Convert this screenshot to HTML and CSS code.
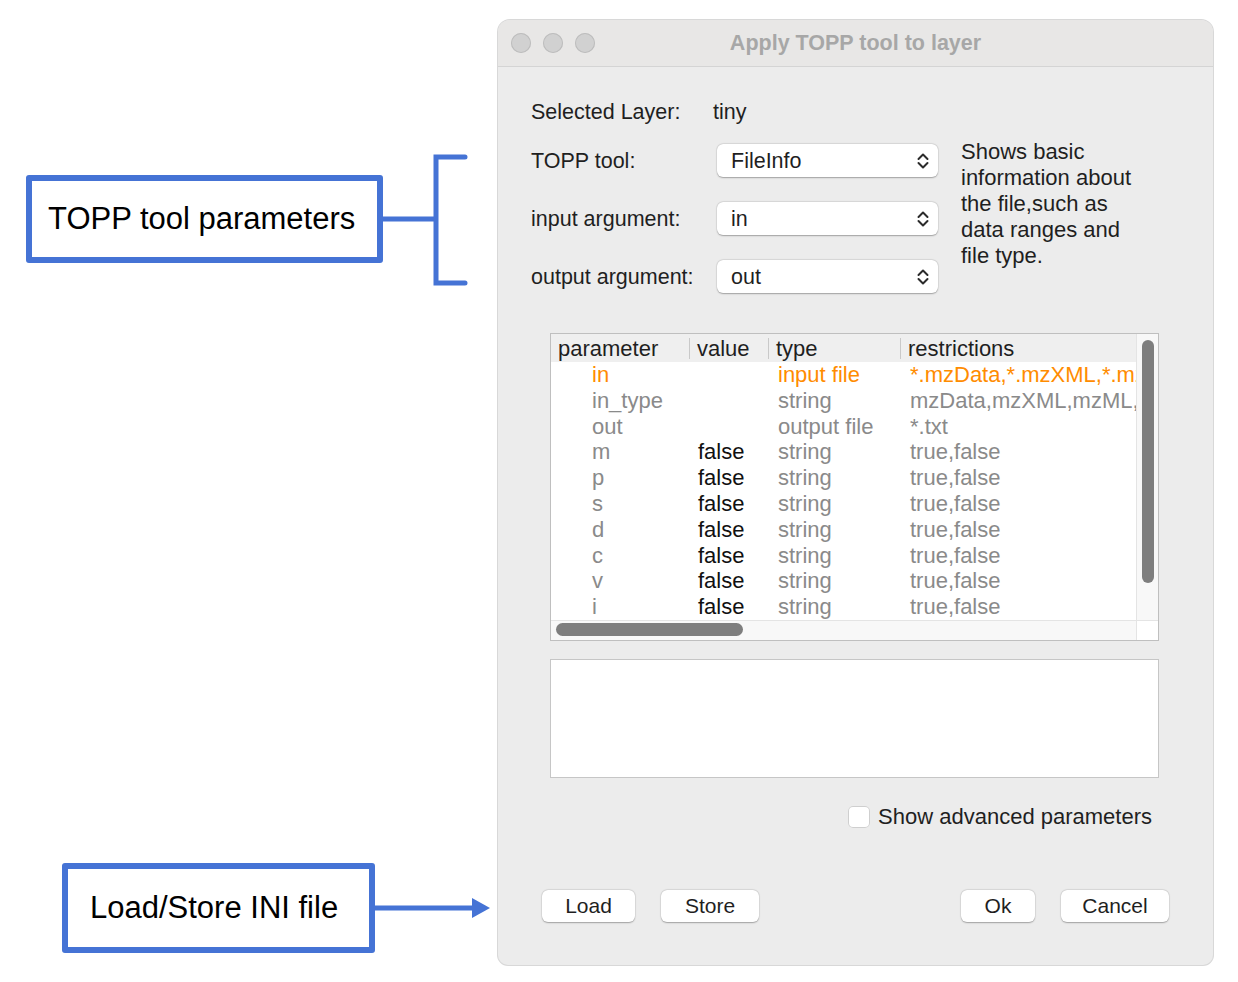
FILE: index.html
```html
<!DOCTYPE html>
<html lang="en">
<head>
<meta charset="utf-8">
<title>Apply TOPP tool to layer</title>
<link rel="stylesheet" href="styles.css">
</head>
<body>
<div class="canvas">
  <div class="dialog">
    <div class="titlebar">
      <div class="lights"><span class="light"></span><span class="light"></span><span class="light"></span></div>
      <div class="title">Apply TOPP tool to layer</div>
      <div></div>
    </div>
    <div class="body">
      <div class="top">
        <div class="form">
          <div class="frow frow-layer"><span class="flabel">Selected Layer:</span><span class="fvalue">tiny</span></div>
          <div class="frow"><span class="flabel">TOPP tool:</span>
            <div class="popup"><span class="ptext">FileInfo</span><svg class="chev" width="12" height="18" viewBox="0 0 12 18"><path d="M1.5 7 L6 2.5 L10.5 7 M1.5 11 L6 15.5 L10.5 11"/></svg></div>
          </div>
          <div class="frow"><span class="flabel">input argument:</span>
            <div class="popup"><span class="ptext">in</span><svg class="chev" width="12" height="18" viewBox="0 0 12 18"><path d="M1.5 7 L6 2.5 L10.5 7 M1.5 11 L6 15.5 L10.5 11"/></svg></div>
          </div>
          <div class="frow"><span class="flabel">output argument:</span>
            <div class="popup"><span class="ptext">out</span><svg class="chev" width="12" height="18" viewBox="0 0 12 18"><path d="M1.5 7 L6 2.5 L10.5 7 M1.5 11 L6 15.5 L10.5 11"/></svg></div>
          </div>
        </div>
        <p class="desc">Shows basic<br>information about<br>the file,such as<br>data ranges and<br>file type.</p>
      </div>

      <div class="table">
        <div class="viewport">
          <div class="thead">
            <div class="th th-first">parameter</div>
            <div class="th">value</div>
            <div class="th">type</div>
            <div class="th">restrictions</div>
          </div>
          <div class="tr hl"><div class="td c1">in</div><div class="td c2"></div><div class="td c3">input file</div><div class="td c4">*.mzData,*.mzXML,*.mzML,*.dta,*.dta2d</div></div>
          <div class="tr dim"><div class="td c1">in_type</div><div class="td c2"></div><div class="td c3">string</div><div class="td c4">mzData,mzXML,mzML,dta,dta2d</div></div>
          <div class="tr dim"><div class="td c1">out</div><div class="td c2"></div><div class="td c3">output file</div><div class="td c4">*.txt</div></div>
          <div class="tr dim"><div class="td c1">m</div><div class="td c2 val">false</div><div class="td c3">string</div><div class="td c4">true,false</div></div>
          <div class="tr dim"><div class="td c1">p</div><div class="td c2 val">false</div><div class="td c3">string</div><div class="td c4">true,false</div></div>
          <div class="tr dim"><div class="td c1">s</div><div class="td c2 val">false</div><div class="td c3">string</div><div class="td c4">true,false</div></div>
          <div class="tr dim"><div class="td c1">d</div><div class="td c2 val">false</div><div class="td c3">string</div><div class="td c4">true,false</div></div>
          <div class="tr dim"><div class="td c1">c</div><div class="td c2 val">false</div><div class="td c3">string</div><div class="td c4">true,false</div></div>
          <div class="tr dim"><div class="td c1">v</div><div class="td c2 val">false</div><div class="td c3">string</div><div class="td c4">true,false</div></div>
          <div class="tr dim"><div class="td c1">i</div><div class="td c2 val">false</div><div class="td c3">string</div><div class="td c4">true,false</div></div>
        </div>
        <div class="vscroll"><div class="vthumb"></div></div>
        <div class="hscroll"><div class="hthumb"></div></div>
        <div class="corner"></div>
      </div>

      <div class="textarea"></div>

      <label class="check"><span class="checkbox"></span><span>Show advanced parameters</span></label>

      <div class="buttons">
        <div class="group">
          <button class="btn w-load">Load</button>
          <button class="btn w-store">Store</button>
        </div>
        <div class="group">
          <button class="btn w-ok">Ok</button>
          <button class="btn w-cancel">Cancel</button>
        </div>
      </div>
    </div>
  </div>

  <div class="callout callout-params">TOPP tool parameters</div>
  <svg class="bracket" width="92" height="140" viewBox="0 0 92 140">
    <path d="M2 69 H56 M85 7 H56 V133 H85"/>
  </svg>

  <div class="callout callout-ini">Load/Store INI file</div>
  <svg class="arrow" width="122" height="26" viewBox="0 0 122 26">
    <path class="shaft" d="M3 13 H102"/>
    <polygon points="100,3 118,13 100,23"/>
  </svg>
</div>
</body>
</html>
```

FILE: styles.css
```css
body {
  margin: 0;
  background: #ffffff;
  font-family: "Liberation Sans", Arial, sans-serif;
}

.canvas {
  position: relative;
  display: flow-root;
  width: 1238px;
  height: 982px;
  overflow: hidden;
}

/* ---------- dialog ---------- */
.dialog {
  margin: 20px 0 0 498px;
  width: 715px;
  height: 945px;
  box-sizing: border-box;
  background: #ececec;
  border-radius: 12px 12px 10px 10px;
  box-shadow: 0 0 0 1px #d8d8d8;
  display: flex;
  flex-direction: column;
  overflow: hidden;
  color: #1f1f1f;
}

.titlebar {
  flex: none;
  height: 46px;
  background: #e8e7e6;
  border-bottom: 1px solid #d4d4d4;
  display: grid;
  grid-template-columns: 1fr auto 1fr;
  align-items: center;
}

.lights {
  display: flex;
  gap: 12px;
  padding-left: 13px;
}

.light {
  width: 20px;
  height: 20px;
  border-radius: 50%;
  background: #d1d1d1;
  box-shadow: inset 0 0 0 1px #bdbdbd;
}

.title {
  font-weight: bold;
  font-size: 21.5px;
  color: #a7a7a7;
}

.body {
  flex: 1;
  padding: 0 33px;
  display: flex;
  flex-direction: column;
}

.top {
  display: flex;
  margin-top: 28px;
}

.form {
  width: 407px;
  display: flex;
  flex-direction: column;
}

.frow {
  display: flex;
  align-items: center;
  height: 33px;
  margin-bottom: 25px;
  font-size: 21.5px;
}

.frow-layer {
  margin-bottom: 16px;
}

.frow:last-child {
  margin-bottom: 0;
}

.flabel {
  flex: none;
  width: 182px;
  padding-top: 2px;
}

.fvalue,
.ptext {
  padding-top: 2px;
}

.popup {
  margin-left: 4px;
  width: 221px;
  height: 33px;
  box-sizing: border-box;
  background: #ffffff;
  border-radius: 6px;
  box-shadow: 0 0.5px 1.5px rgba(0, 0, 0, 0.3), 0 0 0 0.5px rgba(0, 0, 0, 0.06);
  display: flex;
  align-items: center;
  justify-content: space-between;
  padding: 0 9px 0 14px;
}

.chev path {
  fill: none;
  stroke: #2b2b2b;
  stroke-width: 2;
  stroke-linecap: round;
  stroke-linejoin: round;
}

.desc {
  margin: 44px 0 0 23px;
  font-size: 22px;
  line-height: 26px;
}

/* ---------- table ---------- */
.table {
  margin: 40px 0 0 19px;
  width: 609px;
  height: 308px;
  box-sizing: border-box;
  border: 1px solid #bfbfbf;
  background: #ffffff;
  display: grid;
  grid-template-columns: 1fr 22px;
  grid-template-rows: 1fr 20px;
}

.viewport {
  grid-row: 1;
  grid-column: 1;
  overflow: hidden;
  font-size: 22px;
}

.thead {
  display: grid;
  grid-template-columns: 138px 79px 132px 1fr;
  height: 28px;
  align-items: center;
  background: #efefef;
  color: #1f1f1f;
}

.th {
  height: 21px;
  line-height: 21px;
  padding-left: 7px;
  border-left: 1px solid #c9c9c9;
  white-space: nowrap;
}

.th-first {
  border-left: none;
}

.tr {
  display: grid;
  grid-template-columns: 138px 79px 132px 1fr;
  height: 25.8px;
  line-height: 25.8px;
  white-space: nowrap;
}

.td {
  overflow: hidden;
}

.c1 { padding-left: 41px; }
.c2 { padding-left: 9px; }
.c3 { padding-left: 10px; }
.c4 { padding-left: 10px; }

.hl { color: #ff8c00; }
.dim { color: #8a8a8a; }
.dim .val { color: #111111; }

.vscroll {
  grid-row: 1;
  grid-column: 2;
  background: #f8f8f8;
  border-left: 1px solid #e4e4e4;
  padding: 6px 0 0 5px;
}

.vthumb {
  width: 12px;
  height: 243px;
  border-radius: 6px;
  background: #7e7e7e;
}

.hscroll {
  grid-row: 2;
  grid-column: 1;
  background: #f8f8f8;
  border-top: 1px solid #e4e4e4;
  padding: 2px 0 0 5px;
}

.hthumb {
  width: 187px;
  height: 13px;
  border-radius: 7px;
  background: #7e7e7e;
}

.corner {
  grid-row: 2;
  grid-column: 2;
  background: #ffffff;
  border-left: 1px solid #e4e4e4;
  border-top: 1px solid #e4e4e4;
}

.textarea {
  margin: 18px 0 0 19px;
  width: 609px;
  height: 119px;
  box-sizing: border-box;
  background: #ffffff;
  border: 1px solid #c6c6c6;
}

/* ---------- checkbox ---------- */
.check {
  align-self: flex-end;
  margin: 28px 28px 0 0;
  height: 22px;
  display: flex;
  align-items: center;
  gap: 8px;
  font-size: 22px;
}

.checkbox {
  width: 22px;
  height: 22px;
  box-sizing: border-box;
  border-radius: 5px;
  background: #ffffff;
  box-shadow: inset 0 0 0 1px #cfcfcf;
}

/* ---------- buttons ---------- */
.buttons {
  margin: 62px 11px 0;
  display: flex;
  justify-content: space-between;
}

.group {
  display: flex;
  gap: 26px;
}

.btn {
  height: 32px;
  padding: 0;
  border: none;
  border-radius: 6px;
  background: #ffffff;
  box-shadow: 0 0.5px 1.5px rgba(0, 0, 0, 0.3), 0 0 0 0.5px rgba(0, 0, 0, 0.06);
  font-family: "Liberation Sans", Arial, sans-serif;
  font-size: 21px;
  color: #1f1f1f;
}

.w-load { width: 93px; }
.w-store { width: 98px; }
.w-ok { width: 74px; }
.w-cancel { width: 108px; }

/* ---------- annotations ---------- */
.callout {
  position: absolute;
  box-sizing: border-box;
  border: 6px solid #4573d5;
  border-radius: 3px;
  background: #ffffff;
  display: flex;
  align-items: center;
  font-size: 31px;
  color: #000000;
}

.callout-params {
  left: 26px;
  top: 175px;
  width: 357px;
  height: 88px;
  padding-left: 16px;
}

.callout-ini {
  left: 62px;
  top: 863px;
  width: 313px;
  height: 90px;
  padding-left: 22px;
}

.bracket {
  position: absolute;
  left: 380px;
  top: 150px;
}

.bracket path {
  fill: none;
  stroke: #4573d5;
  stroke-width: 5;
  stroke-linecap: round;
  stroke-linejoin: miter;
}

.arrow {
  position: absolute;
  left: 372px;
  top: 895px;
}

.arrow .shaft {
  fill: none;
  stroke: #4573d5;
  stroke-width: 5;
}

.arrow polygon {
  fill: #4573d5;
}
```
